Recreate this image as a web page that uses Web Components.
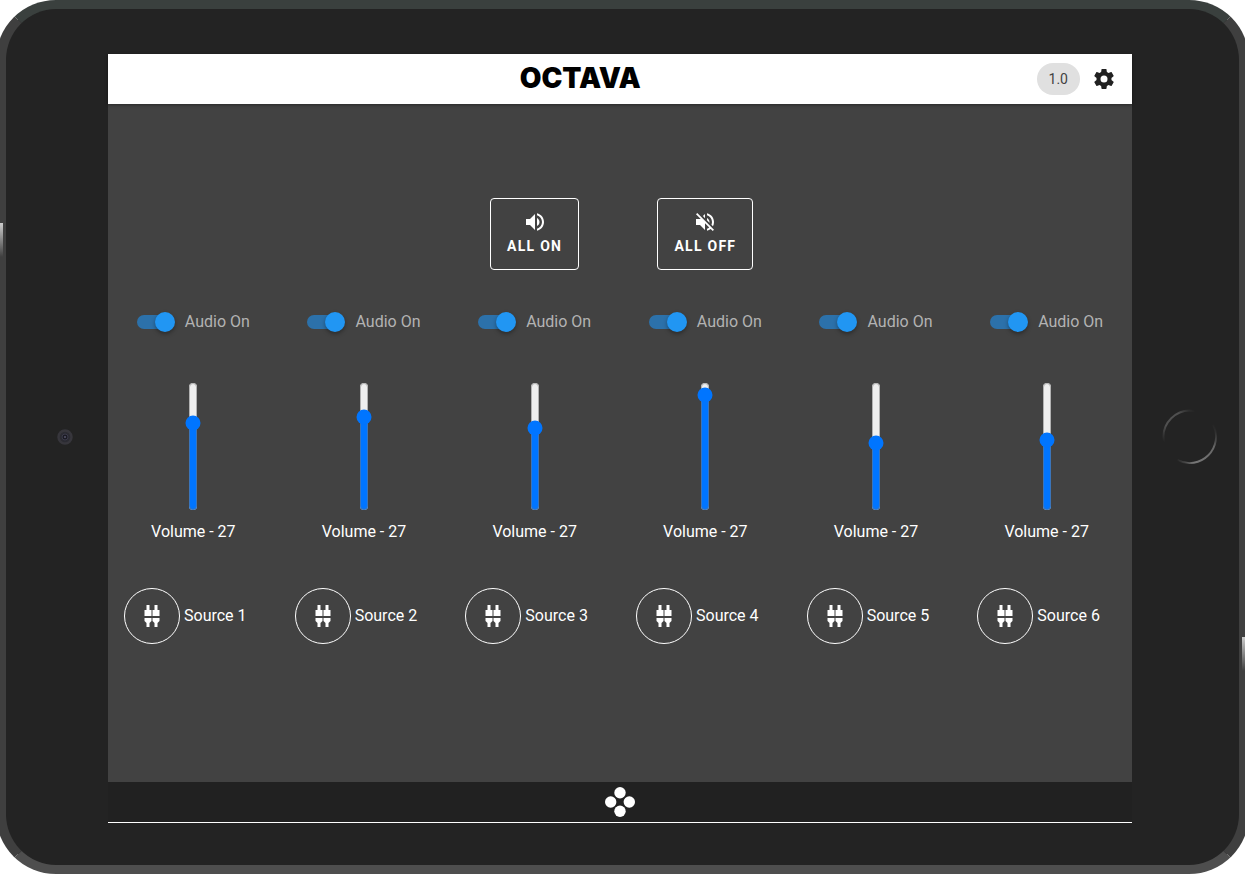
<!DOCTYPE html>
<html lang="en">
<head>
<meta charset="utf-8">
<title>Octava Audio Control</title>
<style>
html, body { margin: 0; height: 100%; background: #fff; }
body { font: 16px/24px Roboto, "Liberation Sans", sans-serif; color: #fff; }
</style>
</head>
<body>
<tablet-frame>
  <app-header slot="header" version="1.0"></app-header>
  <audio-mixer></audio-mixer>
  <app-footer slot="footer"></app-footer>
</tablet-frame>
<script>
const define = (name, html, setup) => {
  const template = document.createElement('template');
  template.innerHTML = '<style>*{box-sizing:border-box}</style>' + html;
  customElements.define(name, class extends HTMLElement {
    constructor() {
      super();
      this.attachShadow({ mode: 'open' }).append(template.content.cloneNode(true));
    }
    connectedCallback() { if (setup) setup(this.shadowRoot, this); }
  });
};

const icons = {
  on: '<path d="M14 3.23V5.29C16.89 6.15 19 8.83 19 12C19 15.17 16.89 17.84 14 18.7V20.77C18 19.86 21 16.28 21 12C21 7.72 18 4.14 14 3.23M16.5 12C16.5 10.23 15.5 8.71 14 7.97V16C15.5 15.29 16.5 13.76 16.5 12M3 9V15H7L12 20V4L7 9H3Z"/>',
  off: '<path d="M12 4L9.91 6.09L12 8.18M4.27 3L3 4.27L7.73 9H3V15H7L12 20V13.27L16.25 17.53C15.58 18.04 14.83 18.46 14 18.7V20.77C15.38 20.45 16.63 19.82 17.68 18.96L19.73 21L21 19.73L12 10.73M19 12C19 12.94 18.8 13.82 18.46 14.64L19.97 16.15C20.62 14.91 21 13.5 21 12C21 7.72 18 4.14 14 3.23V5.29C16.89 6.15 19 8.83 19 12M16.5 12C16.5 10.23 15.5 8.71 14 7.97V10.18L16.45 12.63C16.5 12.43 16.5 12.21 16.5 12Z"/>',
  cog: '<path d="M12,15.5A3.5,3.5 0 0,1 8.5,12A3.5,3.5 0 0,1 12,8.5A3.5,3.5 0 0,1 15.5,12A3.5,3.5 0 0,1 12,15.5M19.43,12.97C19.47,12.65 19.5,12.33 19.5,12C19.5,11.67 19.47,11.34 19.43,11L21.54,9.37C21.73,9.22 21.78,8.95 21.66,8.73L19.66,5.27C19.54,5.05 19.27,4.96 19.05,5.05L16.56,6.05C16.04,5.66 15.5,5.32 14.87,5.07L14.5,2.42C14.46,2.18 14.25,2 14,2H10C9.75,2 9.54,2.18 9.5,2.42L9.13,5.07C8.5,5.32 7.96,5.66 7.44,6.05L4.95,5.05C4.73,4.96 4.46,5.05 4.34,5.27L2.34,8.73C2.21,8.95 2.27,9.22 2.46,9.37L4.57,11C4.53,11.34 4.5,11.67 4.5,12C4.5,12.33 4.53,12.65 4.57,12.97L2.46,14.63C2.27,14.78 2.21,15.05 2.34,15.27L4.34,18.73C4.46,18.95 4.73,19.03 4.95,18.95L7.44,17.94C7.96,18.34 8.5,18.68 9.13,18.93L9.5,21.58C9.54,21.82 9.75,22 10,22H14C14.25,22 14.46,21.82 14.5,21.58L14.87,18.93C15.5,18.67 16.04,18.34 16.56,17.94L19.05,18.95C19.27,19.03 19.54,18.95 19.66,18.73L21.66,15.27C21.78,15.05 21.73,14.78 21.54,14.63L19.43,12.97Z"/>',
  jack: '<path d="M6.5 1h3v5h2v6h-7V6h2zM14.5 1h3v5h2v6h-7V6h2zM4.5 14h7v3l-2 2v4h-3v-4l-2-2zM12.500 14h7v3l-2 2v4h-3v-4l-2-2z"/>',
  dots: '<circle cx="16" cy="6.7" r="5.7"/><circle cx="6.7" cy="16" r="5.7"/><circle cx="25.3" cy="16" r="5.7"/><circle cx="16" cy="25.3" r="5.7"/>'
};

define('ui-icon', `<style>
:host { display: block; width: 24px; height: 24px; }
:host([name="dots"]) { width: 32px; height: 32px; }
svg { display: block; width: 100%; height: 100%; fill: currentColor; }
</style><svg aria-hidden="true"></svg>`, (root, host) => {
  const svg = root.querySelector('svg'), name = host.getAttribute('name');
  svg.setAttribute('viewBox', name === 'dots' ? '0 0 32 32' : '0 0 24 24');
  svg.innerHTML = icons[name];
});

define('tablet-frame', `<style>
:host { display: block; height: 100vh; min-height: 640px; margin-right: 2px; padding-bottom: 5px; box-sizing: border-box; overflow: hidden; }
.shell { position: relative; height: 100%; margin: 0 -4px; display: grid; grid-template-columns: 102px minmax(0, 1fr) 107px;
  align-items: center; padding: 45px 0 42px; background: #232323; border: solid #3f3f3f;
  border-width: 9px 10px; border-top-color: #3a403e; border-bottom-color: #4e4e4e; border-radius: 60px; }
.screen { height: 100%; display: flex; flex-direction: column; background: #424242; border-bottom: 1px solid #fff; }
.body { flex: 1; min-height: 0; display: flex; flex-direction: column; }
.camera { justify-self: center; width: 16px; height: 16px; margin: 0 0 4px 16px; }
.home { justify-self: center; width: 56px; height: 56px; margin: 0 0 4px 8px; }
svg { display: block; width: 100%; height: 100%; fill: none; }
.key { position: absolute; width: 4px; height: 34px; background: linear-gradient(#ccc, #3f3f3f); }
.left { left: -7px; top: 214px; }
.right { right: -7px; bottom: 194px; }
</style>
<div class="shell">
  <div class="camera"><svg viewBox="0 0 16 16"><circle cx="8" cy="8" r="6.5" fill="#2b2b32" stroke="#37363c" stroke-width="2.5"/><circle cx="8" cy="8" r="3" fill="#1b1b24" stroke="#3a3948"/><circle cx="8" cy="8" r="1" fill="#565568"/></svg></div>
  <div class="screen"><slot name="header"></slot><div class="body"><slot></slot></div><slot name="footer"></slot></div>
  <div class="home"><svg viewBox="0 0 58 58"><defs>
    <linearGradient id="a" gradientUnits="userSpaceOnUse" x1="16" y1="54" x2="54" y2="16"><stop offset="0" stop-color="#777" stop-opacity="0"/><stop offset=".2" stop-color="#777"/><stop offset=".7" stop-color="#666"/><stop offset="1" stop-color="#444" stop-opacity="0"/></linearGradient>
    <linearGradient id="b" gradientUnits="userSpaceOnUse" x1="2" y1="34" x2="34" y2="2"><stop offset="0" stop-color="#555" stop-opacity="0"/><stop offset=".3" stop-color="#505050"/><stop offset=".7" stop-color="#505050"/><stop offset="1" stop-color="#444" stop-opacity="0"/></linearGradient></defs>
    <path d="M2 34A27.500 27.500 0 0 1 34 2" stroke="url(#b)" stroke-width="2"/><path d="M16 53A27.500 27.500 0 0 0 53 16" stroke="url(#a)" stroke-width="2"/></svg></div>
  <span class="key left"></span><span class="key right"></span>
</div>`);

define('app-header', `<style>
:host { display: block; position: relative; z-index: 1; }
header { display: flex; align-items: center; height: 50px; padding: 0 16px;
  background: #fff; color: #212121; box-shadow: 0 1px 3px rgba(0,0,0,.4); }
.brand { flex: 1; margin: 0; padding-bottom: 2px; text-align: center; font: 900 28px/30px Inter, sans-serif; color: #000; }
.tools { display: flex; align-items: center; gap: 12px; }
.chip { padding: 0 12px; border-radius: 16px; background: #e0e0e0; font-size: 14px; line-height: 32px; color: #424242; }
button { padding: 0; border: 0; background: none; color: inherit; }
</style>
<header><h1 class="brand">OCTAVA</h1><div class="tools"><span class="chip"></span><button aria-label="Settings"><ui-icon name="cog"></ui-icon></button></div></header>`,
(root, host) => { root.querySelector('.chip').textContent = host.getAttribute('version'); });

define('app-footer', `<style>
:host { display: block; }
footer { display: flex; justify-content: center; align-items: center; height: 40px; background: #212121; }
button { padding: 0; border: 0; background: none; color: #fff; }
</style><footer><button aria-label="Home"><ui-icon name="dots"></ui-icon></button></footer>`);

define('outline-button', `<style>
:host { display: block; }
button { display: flex; flex-direction: column; align-items: center; justify-content: center; height: 72px; padding: 0 16px;
  border: 1px solid #fff; border-radius: 4px; background: none; color: #fff; font: 700 14px/24px Roboto, sans-serif; letter-spacing: 0.09em; }
</style><button><ui-icon></ui-icon><span><slot></slot></span></button>`,
(root, host) => {
  const icon = document.createElement('ui-icon');
  icon.setAttribute('name', host.getAttribute('icon'));
  root.querySelector('ui-icon').replaceWith(icon);
});

define('audio-switch', `<style>
:host { display: block; }
label { display: flex; align-items: center; gap: 10px; color: #b3b3b3; }
input { appearance: none; display: grid; align-items: center; width: 38px; height: 20px; margin: 0; }
input::before, input::after { content: ""; grid-area: 1 / 1; }
input::before { width: 36px; height: 14px; border-radius: 7px; background: #2c71aa; }
input::after { justify-self: end; width: 20px; height: 20px; border-radius: 50%; background: #2196f3; box-shadow: 0 2px 4px rgba(0,0,0,.35); }
input:not(:checked)::after { justify-self: start; }
</style><label><input type="checkbox" role="switch" checked><slot></slot></label>`);

define('volume-slider', `<style>
:host { display: block; }
label { display: flex; flex-direction: column; align-items: center; gap: 9px; }
input { writing-mode: vertical-lr; direction: rtl; width: 16px; height: 129px; margin: 0; }
</style><label><input type="range" min="0" max="100"><span><slot></slot></span></label>`,
(root, host) => { root.querySelector('input').value = host.getAttribute('level'); });

define('source-button', `<style>
:host { display: block; }
div { display: flex; align-items: center; gap: 4px; }
button { display: grid; place-items: center; width: 56px; height: 56px; padding: 0; border: 1px solid #fff; border-radius: 50%; background: none; color: #fff; }
</style><div><button aria-labelledby="name"><ui-icon name="jack"></ui-icon></button><span id="name"><slot></slot></span></div>`);

define('audio-channel', `<style>
:host { display: block; }
section { display: flex; flex-direction: column; align-items: center; }
volume-slider { margin-top: 48px; }
source-button { align-self: flex-start; margin: 44px 0 0 16px; }
</style><section><audio-switch>Audio On</audio-switch><volume-slider></volume-slider><source-button><slot></slot></source-button></section>`,
(root, host) => {
  const slider = document.createElement('volume-slider');
  slider.setAttribute('level', host.getAttribute('level'));
  slider.textContent = 'Volume - 27';
  root.querySelector('volume-slider').replaceWith(slider);
});

define('audio-mixer', `<style>
:host { flex: 1; display: flex; flex-direction: column; justify-content: center; padding-bottom: 45px; box-sizing: border-box; }
.grid { display: grid; grid-template-columns: repeat(6, minmax(0, 1fr)); row-gap: 40px; }
outline-button { justify-self: center; }
outline-button:first-child { grid-column: 3; }
.row { grid-column: 1 / -1; display: grid; grid-template-columns: subgrid; }
</style>
<div class="grid">
  <outline-button icon="on">ALL ON</outline-button><outline-button icon="off">ALL OFF</outline-button>
  <div class="row">
    <audio-channel level="70">Source 1</audio-channel><audio-channel level="76">Source 2</audio-channel>
    <audio-channel level="66">Source 3</audio-channel><audio-channel level="95">Source 4</audio-channel>
    <audio-channel level="53">Source 5</audio-channel><audio-channel level="55">Source 6</audio-channel>
  </div>
</div>`);
</script>
</body>
</html>
